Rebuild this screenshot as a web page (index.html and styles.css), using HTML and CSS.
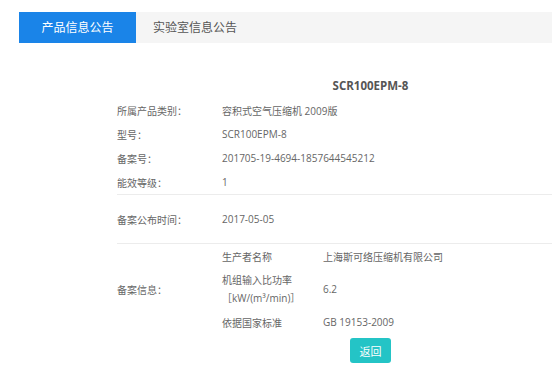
FILE: index.html
```
<!DOCTYPE html>
<html lang="zh-CN">
<head>
<meta charset="utf-8">
<title>产品信息公告</title>
<link rel="stylesheet" href="styles.css">
</head>
<body>
<div class="tabs">
  <div class="tab active">产品信息公告</div>
  <div class="tab">实验室信息公告</div>
</div>
<div class="detail">
  <div class="title">SCR100EPM-8</div>
  <div class="row"><div class="label">所属产品类别：</div><div class="value">容积式空气压缩机 2009版</div></div>
  <div class="row"><div class="label">型号：</div><div class="value">SCR100EPM-8</div></div>
  <div class="row"><div class="label">备案号：</div><div class="value">201705-19-4694-1857644545212</div></div>
  <div class="row line"><div class="label">能效等级：</div><div class="value">1</div></div>
  <div class="row tall line"><div class="label">备案公布时间：</div><div class="value">2017-05-05</div></div>
  <div class="row info">
    <div class="label">备案信息：</div>
    <div class="sub">
      <div class="subrow"><div class="subname">生产者名称</div><div class="subval">上海斯可络压缩机有限公司</div></div>
      <div class="subrow two"><div class="subname">机组输入比功率<br>［kW/(m³/min)］</div><div class="subval">6.2</div></div>
      <div class="subrow"><div class="subname">依据国家标准</div><div class="subval">GB 19153-2009</div></div>
    </div>
  </div>
  <div class="actions"><button class="back">返回</button></div>
</div>
</body>
</html>
```
FILE: styles.css
```
html, body {
  margin: 0;
  padding: 0;
  background: #fff;
}
body {
  font-family: "Open Sans", "Noto Sans CJK SC", sans-serif;
  color: #666;
  font-size: 10px;
}
.tabs {
  display: flex;
  margin: 12px 0 0 19px;
  height: 31px;
  background: #f5f5f5;
}
.tab {
  font-size: 12px;
  line-height: 31px;
  color: #555;
  padding-left: 17px;
}
.tab.active {
  width: 117px;
  padding: 0;
  text-align: center;
  background: #1a84e8;
  color: #fff;
}
.detail {
  margin-left: 117px;
}
.title {
  margin-top: 30px;
  padding-left: 72px;
  height: 25px;
  line-height: 25px;
  text-align: center;
  font-weight: bold;
  font-size: 11.5px;
  color: #555;
}
.row {
  display: flex;
  align-items: center;
  height: 24px;
}
.row.line {
  border-bottom: 1px solid #ececec;
}
.row.tall {
  height: 48px;
}
.label {
  width: 105px;
  flex: none;
}
.row.info {
  height: auto;
}
.sub {
  flex: 1;
}
.subrow {
  display: flex;
  align-items: center;
  height: 24px;
}
.subrow.two {
  height: 42px;
  line-height: 18px;
}
.subname {
  width: 101px;
  flex: none;
}
.actions {
  text-align: center;
  padding: 4px 0 0 72px;
}
.back {
  width: 41px;
  height: 25px;
  border: none;
  border-radius: 3px;
  background: #24c4c6;
  color: #fff;
  font-family: "Noto Sans CJK SC", sans-serif;
  font-size: 11px;
  padding: 0;
}
```
